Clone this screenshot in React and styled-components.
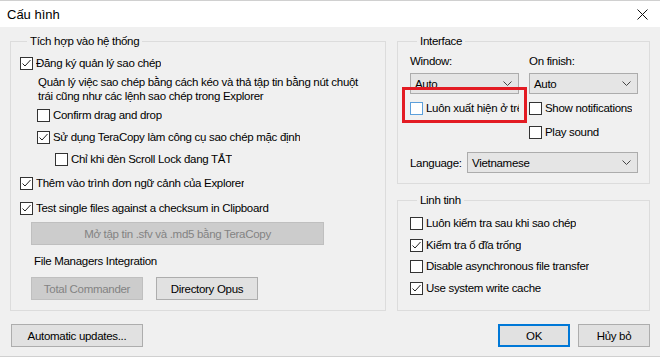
import React from 'react';
import styled, { createGlobalStyle } from 'styled-components';

// ─── Design tokens ────────────────────────────────────────
const colors = {
  bg: '#f0f0f0',
  text: '#000000',
  groupBorder: '#dcdcdc',
  btnBg: '#e1e1e1',
  btnBorder: '#adadad',
  disabledBg: '#cccccc',
  disabledBorder: '#bfbfbf',
  disabledText: '#838383',
  selectBg: '#e5e5e5',
  selectBorder: '#acacac',
  focus: '#0078d7',
  red: '#e31b23',
};

const GlobalStyle = createGlobalStyle`
  * { box-sizing: border-box; }
  html, body { margin: 0; padding: 0; background: ${colors.bg}; }
  body {
    font-family: 'Liberation Sans', 'Noto Sans', sans-serif;
    font-size: 11.5px;
    letter-spacing: -0.3px;
    color: ${colors.text};
  }
`;

// ─── Window frame ─────────────────────────────────────────
const Window = styled.div`
  width: 660px;
  height: 357px;
  background: ${colors.bg};
  border-top: 1px solid #d0d0d0;
  border-bottom: 1px solid #d0d0d0;
  display: flex;
  flex-direction: column;
  overflow: hidden;
`;

const TitleBar = styled.div`
  height: 26px;
  background: #ffffff;
  display: flex;
  align-items: center;
  justify-content: space-between;
  padding: 0 12px 0 7px;
  flex-shrink: 0;
`;

const Title = styled.span`
  font-size: 13px;
  letter-spacing: 0;
  color: #000;
`;

const Body = styled.div`
  flex: 1;
  display: flex;
  flex-direction: column;
  padding: 6px 10px 0 10px;
`;

const Columns = styled.div`
  display: flex;
  gap: 11px;
  height: 278px;
`;

const RightColumn = styled.div`
  width: 253px;
  display: flex;
  flex-direction: column;
  gap: 8px;
`;

// ─── Group boxes ──────────────────────────────────────────
const Group = styled.fieldset`
  margin: 0;
  border: 1px solid ${colors.groupBorder};
  padding: ${({ pad }) => pad || '0 10px 0 9px'};
  width: ${({ w }) => w}px;
  height: ${({ h }) => (h ? `${h}px` : 'auto')};
  flex: ${({ grow }) => (grow ? 1 : 'none')};
  display: flex;
  flex-direction: column;
  min-width: 0;
`;

const Legend = styled.legend`
  padding: 0 3px;
  margin-left: 7px;
  line-height: 16px;
`;

// ─── Checkbox rows ────────────────────────────────────────
const Row = styled.label`
  display: flex;
  align-items: center;
  height: 16px;
  margin-top: ${({ mt }) => mt || 0}px;
  margin-left: ${({ indent }) => indent || 0}px;
  white-space: nowrap;
  position: relative;
`;

const Box = styled.span`
  width: 13px;
  height: 13px;
  border: 1px solid ${({ hot }) => (hot ? '#5c9fdb' : '#333333')};
  background: #ffffff;
  display: inline-flex;
  align-items: center;
  justify-content: center;
  flex-shrink: 0;
  margin-right: 3px;
`;

const RowText = styled.span`
  line-height: 16px;
  overflow: hidden;
  max-width: ${({ max }) => (max ? `${max}px` : 'none')};
`;

const Highlight = styled.span`
  position: absolute;
  left: -8px;
  top: -13px;
  width: 125px;
  height: 36px;
  border: 3px solid ${colors.red};
  pointer-events: none;
`;

function Check({ checked, hot }) {
  return (
    <Box hot={hot}>
      {checked && (
        <svg width="11" height="11" viewBox="0 0 11 11">
          <polyline points="1.5,5.5 4,8 9.5,2" fill="none" stroke="#222" strokeWidth="1" />
        </svg>
      )}
    </Box>
  );
}

const Description = styled.div`
  margin: 4px 0 0 18px;
  line-height: 14px;
  white-space: nowrap;
`;

const PlainLabel = styled.div`
  line-height: 16px;
  margin-top: ${({ mt }) => mt || 0}px;
  margin-left: ${({ indent }) => indent || 0}px;
`;

// ─── Buttons ──────────────────────────────────────────────
const Button = styled.button`
  font-family: inherit;
  font-size: 11.5px;
  letter-spacing: -0.3px;
  height: 23px;
  width: ${({ w }) => w}px;
  padding: 0;
  background: ${({ disabled }) => (disabled ? colors.disabledBg : colors.btnBg)};
  border: ${({ primary }) => (primary ? `2px solid ${colors.focus}` : `1px solid ${colors.btnBorder}`)};
  border-color: ${({ disabled, primary }) =>
    primary ? colors.focus : disabled ? colors.disabledBorder : colors.btnBorder};
  color: ${({ disabled }) => (disabled ? colors.disabledText : colors.text)};
  margin-top: ${({ mt }) => mt || 0}px;
  margin-left: ${({ ml }) => ml || 0}px;
  flex-shrink: 0;
`;

const ButtonRow = styled.div`
  display: flex;
  gap: ${({ gap }) => gap || 12}px;
  margin-top: ${({ mt }) => mt || 0}px;
  margin-left: ${({ ml }) => ml || 0}px;
`;

const Footer = styled.div`
  display: flex;
  align-items: center;
  justify-content: space-between;
  margin-top: 13px;
  padding-left: 1px;
`;

// ─── Interface grid ───────────────────────────────────────
const FieldGrid = styled.div`
  display: grid;
  grid-template-columns: 109px 109px;
  column-gap: 10px;
  margin-top: 4px;
`;

const FieldCol = styled.div`
  display: flex;
  flex-direction: column;
`;

const Select = styled.div`
  height: 21px;
  width: ${({ w }) => (w ? `${w}px` : '100%')};
  background: ${colors.selectBg};
  border: 1px solid ${colors.selectBorder};
  display: flex;
  align-items: center;
  justify-content: space-between;
  padding: 0 6px 0 4px;
  margin-top: ${({ mt }) => mt || 0}px;
`;

const LangRow = styled.div`
  display: flex;
  align-items: center;
  justify-content: space-between;
  margin-top: 12px;
`;

function Chevron() {
  return (
    <svg width="9" height="5" viewBox="0 0 9 5">
      <polyline points="0.5,0.5 4.5,4.5 8.5,0.5" fill="none" stroke="#444" strokeWidth="1" />
    </svg>
  );
}

function CloseIcon() {
  return (
    <svg width="11" height="11" viewBox="0 0 11 11">
      <path d="M0.5 0.5 L10.5 10.5 M10.5 0.5 L0.5 10.5" stroke="#111" strokeWidth="1" />
    </svg>
  );
}

// ─── Component ────────────────────────────────────────────
export default function App() {
  return (
    <>
      <GlobalStyle />
      <Window>
        <TitleBar>
          <Title>Cấu hình</Title>
          <CloseIcon />
        </TitleBar>

        <Body>
          <Columns>
            {/* Left group */}
            <Group w={376}>
              <Legend>Tích hợp vào hệ thống</Legend>
              <Row mt={6}>
                <Check checked />
                <RowText>Đăng ký quản lý sao chép</RowText>
              </Row>
              <Description>
                Quản lý việc sao chép bằng cách kéo và thả tập tin bằng nút chuột
                <br />
                trái cũng như các lệnh sao chép trong Explorer
              </Description>
              <Row mt={4} indent={17}>
                <Check />
                <RowText>Confirm drag and drop</RowText>
              </Row>
              <Row mt={6} indent={17}>
                <Check checked />
                <RowText>Sử dụng TeraCopy làm công cụ sao chép mặc định</RowText>
              </Row>
              <Row mt={6} indent={35}>
                <Check />
                <RowText>Chỉ khi đèn Scroll Lock đang TẮT</RowText>
              </Row>
              <Row mt={8}>
                <Check checked />
                <RowText>Thêm vào trình đơn ngữ cảnh của Explorer</RowText>
              </Row>
              <Row mt={9}>
                <Check checked />
                <RowText>Test single files against a checksum in Clipboard</RowText>
              </Row>
              <Button disabled w={293} mt={6} ml={11}>
                Mở tập tin .sfv và .md5 bằng TeraCopy
              </Button>
              <PlainLabel mt={8} indent={14}>File Managers Integration</PlainLabel>
              <ButtonRow mt={8} ml={11} gap={13}>
                <Button disabled w={112}>Total Commander</Button>
                <Button w={102}>Directory Opus</Button>
              </ButtonRow>
            </Group>

            {/* Right column */}
            <RightColumn>
              <Group w={253} h={151} pad="0 11px 0 12px">
                <Legend>Interface</Legend>
                <FieldGrid>
                  <FieldCol>
                    <PlainLabel>Window:</PlainLabel>
                    <Select mt={4}>
                      <span>Auto</span>
                      <Chevron />
                    </Select>
                    <Row mt={6}>
                      <Check hot />
                      <RowText max={94}>Luôn xuất hiện ở trên cùng</RowText>
                      <Highlight />
                    </Row>
                  </FieldCol>
                  <FieldCol>
                    <PlainLabel>On finish:</PlainLabel>
                    <Select mt={4}>
                      <span>Auto</span>
                      <Chevron />
                    </Select>
                    <Row mt={6}>
                      <Check />
                      <RowText>Show notifications</RowText>
                    </Row>
                    <Row mt={8}>
                      <Check />
                      <RowText>Play sound</RowText>
                    </Row>
                  </FieldCol>
                </FieldGrid>
                <LangRow>
                  <span>Language:</span>
                  <Select w={171}>
                    <span>Vietnamese</span>
                    <Chevron />
                  </Select>
                </LangRow>
              </Group>

              <Group w={253} grow pad="0 11px 0 12px">
                <Legend>Linh tinh</Legend>
                <Row mt={7}>
                  <Check />
                  <RowText>Luôn kiểm tra sau khi sao chép</RowText>
                </Row>
                <Row mt={6}>
                  <Check checked />
                  <RowText>Kiểm tra ổ đĩa trống</RowText>
                </Row>
                <Row mt={5}>
                  <Check />
                  <RowText>Disable asynchronous file transfer</RowText>
                </Row>
                <Row mt={6}>
                  <Check checked />
                  <RowText>Use system write cache</RowText>
                </Row>
              </Group>
            </RightColumn>
          </Columns>

          <Footer>
            <Button w={132}>Automatic updates...</Button>
            <ButtonRow gap={8}>
              <Button primary w={72}>OK</Button>
              <Button w={72}>Hủy bỏ</Button>
            </ButtonRow>
          </Footer>
        </Body>
      </Window>
    </>
  );
}
